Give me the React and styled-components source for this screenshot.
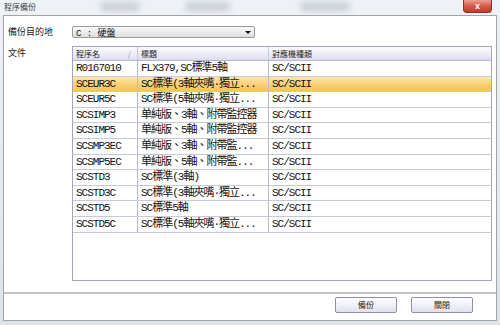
import React from "react";
import styled, { createGlobalStyle } from "styled-components";

const GlobalStyle = createGlobalStyle`
  html, body {
    margin: 0;
    padding: 0;
    background: #dfe4ea;
  }
  body {
    font-family: "Noto Sans CJK TC", "Liberation Sans", sans-serif;
  }
`;

const rows = [
  { name: "R0167010", title: "FLX379,SC標準5軸", type: "SC/SCII" },
  { name: "SCEUR3C", title: "SC標準(3軸夾嘴·獨立...", type: "SC/SCII", selected: true },
  { name: "SCEUR5C", title: "SC標準(5軸夾嘴·獨立...", type: "SC/SCII" },
  { name: "SCSIMP3", title: "单純版、3軸、附帶監控器", type: "SC/SCII" },
  { name: "SCSIMP5", title: "单純版、5軸、附帶監控器", type: "SC/SCII" },
  { name: "SCSMP3EC", title: "单純版、3軸、附帶監...", type: "SC/SCII" },
  { name: "SCSMP5EC", title: "单純版、5軸、附帶監...", type: "SC/SCII" },
  { name: "SCSTD3", title: "SC標準(3軸)", type: "SC/SCII" },
  { name: "SCSTD3C", title: "SC標準(3軸夾嘴·獨立...", type: "SC/SCII" },
  { name: "SCSTD5", title: "SC標準5軸", type: "SC/SCII" },
  { name: "SCSTD5C", title: "SC標準(5軸夾嘴·獨立...", type: "SC/SCII" },
];

const Window = styled.div`
  position: relative;
  width: 500px;
  height: 325px;
  display: flex;
  flex-direction: column;
  overflow: hidden;
  background: linear-gradient(180deg, #eef2f6 0%, #dde3ea 100%);
`;

const TitleBar = styled.div`
  position: relative;
  height: 15px;
  display: flex;
  align-items: flex-start;
  justify-content: space-between;
  padding-left: 4px;
  padding-right: 8px;
`;

const Smudge = styled.span`
  position: absolute;
  top: 2px;
  height: 9px;
  border-radius: 4px;
  background: #b9c0c9;
  filter: blur(3px);
  opacity: 0.7;
`;

const TitleText = styled.span`
  position: relative;
  font-size: 8px;
  line-height: 13px;
  color: #3a3f46;
`;

const CloseButton = styled.div`
  position: relative;
  width: 29px;
  height: 13px;
  border: 1px solid #8b3030;
  border-top: none;
  border-radius: 0 0 4px 4px;
  background: linear-gradient(180deg, #eaa090 0%, #d65a48 50%, #c23c2a 100%);
  color: #fff;
  font-family: "Liberation Sans", sans-serif;
  font-weight: bold;
  font-size: 9px;
  line-height: 12px;
  text-align: center;
  box-sizing: border-box;
`;

const Body = styled.div`
  flex: 1;
  margin: 0 3px 4px 3px;
  background: #fff;
  border: 1px solid #a4a4a4;
  display: flex;
  flex-direction: column;
`;

const Content = styled.div`
  padding: 10px 4px 0 4px;
  display: grid;
  grid-template-columns: 64px 420px;
  grid-template-rows: 12px 235px;
  row-gap: 8px;
`;

const Label = styled.div`
  font-size: 9px;
  line-height: 12px;
  color: #222;
  padding-top: ${(p) => p.offset || 0}px;
`;

const Combo = styled.div`
  width: 183px;
  height: 12px;
  box-sizing: border-box;
  border: 1px solid #9c9c9c;
  border-radius: 2px;
  background: linear-gradient(180deg, #fbfbfb 0%, #ececec 50%, #dedede 100%);
  display: flex;
  align-items: center;
  justify-content: space-between;
  padding: 0 3px 0 3px;
  font-family: "Liberation Mono", "Noto Sans CJK TC", monospace;
  font-size: 9px;
  color: #111;
`;

const Arrow = styled.span`
  width: 0;
  height: 0;
  border-left: 3px solid transparent;
  border-right: 3px solid transparent;
  border-top: 3px solid #111;
`;

const Table = styled.div`
  box-sizing: border-box;
  border: 1px solid #a6a6b8;
  background: #fff;
  display: flex;
  flex-direction: column;
`;

const cols = "64px 131px 1fr";

const HeaderRow = styled.div`
  display: grid;
  grid-template-columns: ${cols};
  height: 14px;
  box-sizing: border-box;
  border-bottom: 1px solid #b8b8d0;
  background: linear-gradient(180deg, #fbfbff 0%, #ececf8 55%, #dcdcf0 100%);
`;

const HeaderCell = styled.div`
  position: relative;
  font-size: 8px;
  line-height: 13px;
  color: #222;
  padding-left: 3px;
  border-left: ${(p) => (p.first ? "none" : "1px solid #c8c8dc")};
`;

const SortMark = styled.span`
  position: absolute;
  right: 6px;
  top: 0;
  color: #9a9aa8;
  font-size: 8px;
`;

const Row = styled.div`
  display: grid;
  grid-template-columns: ${cols};
  height: 15.6px;
  box-sizing: border-box;
  border-bottom: 1px solid #c9c9dc;
  background: ${(p) =>
    p.selected
      ? "linear-gradient(180deg, #fde7a8 0%, #fad27a 50%, #f6c253 100%)"
      : "#fff"};
`;

const Cell = styled.div`
  font-family: "Liberation Mono", "Noto Sans CJK TC", monospace;
  font-size: 11px;
  letter-spacing: -1px;
  line-height: 14.6px;
  color: #111;
  padding-left: 3px;
  white-space: nowrap;
  overflow: hidden;
  border-left: ${(p) => (p.first ? "none" : "1px solid #b9b9d0")};
`;

const Separator = styled.div`
  margin-top: 11px;
  height: 2px;
  background: #c4c4c4;
`;

const Footer = styled.div`
  display: flex;
  justify-content: flex-end;
  gap: 14px;
  padding: 3px 23px 0 0;
`;

const Button = styled.div`
  width: 62px;
  height: 16px;
  box-sizing: border-box;
  border: 1px solid #8e8ea8;
  border-radius: 2px;
  background: linear-gradient(180deg, #ffffff 0%, #f0f0fa 50%, #e0e0f0 100%);
  font-size: 8px;
  line-height: 14px;
  text-align: center;
  color: #222;
`;

export default function App() {
  return (
    <>
      <GlobalStyle />
      <Window>
        <TitleBar>
          <Smudge style={{ left: 100, width: 40 }} />
          <Smudge style={{ left: 185, width: 45 }} />
          <Smudge style={{ left: 300, width: 50 }} />
          <TitleText>程序備份</TitleText>
          <CloseButton>x</CloseButton>
        </TitleBar>
        <Body>
          <Content>
            <Label>備份目的地</Label>
            <Combo>
              <span>C : 硬盤</span>
              <Arrow />
            </Combo>
            <Label offset={1}>文件</Label>
            <Table>
              <HeaderRow>
                <HeaderCell first>
                  程序名
                  <SortMark>/</SortMark>
                </HeaderCell>
                <HeaderCell>標題</HeaderCell>
                <HeaderCell>對應機種類</HeaderCell>
              </HeaderRow>
              {rows.map((r) => (
                <Row key={r.name} selected={r.selected}>
                  <Cell first>{r.name}</Cell>
                  <Cell>{r.title}</Cell>
                  <Cell>{r.type}</Cell>
                </Row>
              ))}
            </Table>
          </Content>
          <Separator />
          <Footer>
            <Button>備份</Button>
            <Button>關閉</Button>
          </Footer>
        </Body>
      </Window>
    </>
  );
}
